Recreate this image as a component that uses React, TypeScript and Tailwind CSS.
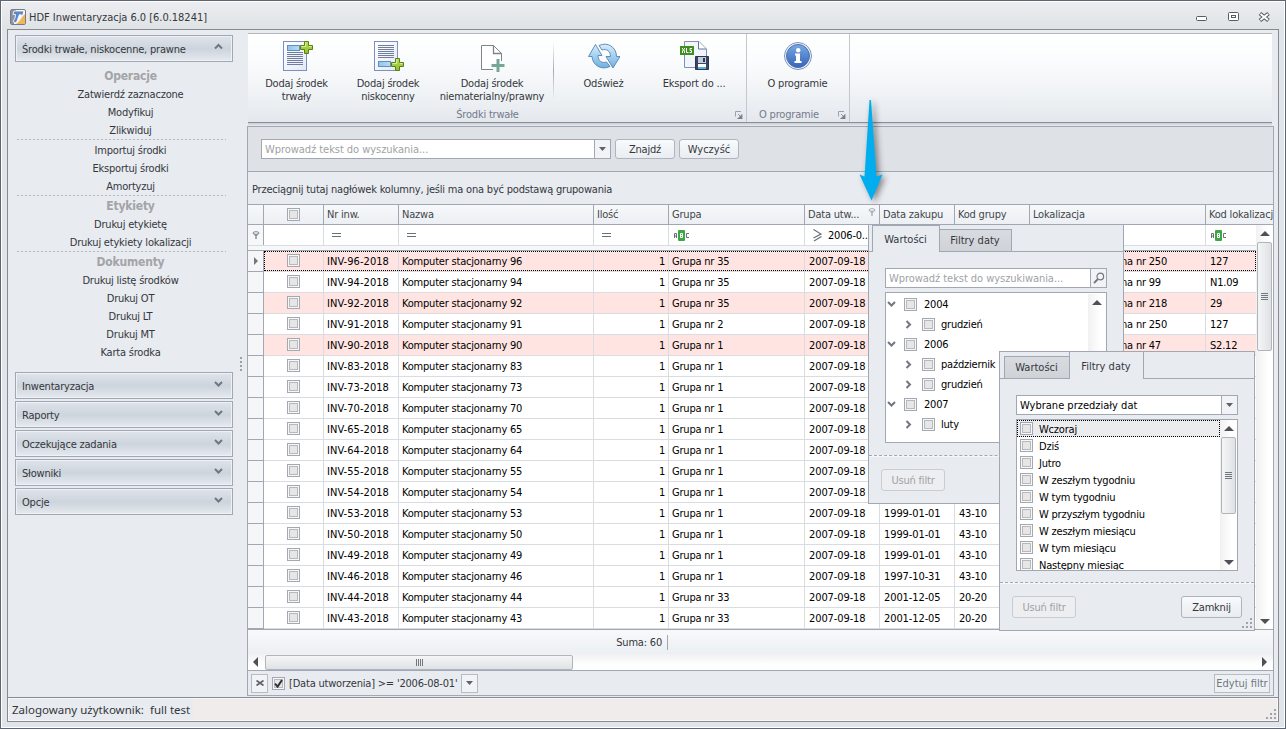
import React from 'react';

const sidebarGroups: { title?: string; items: string[] }[] = [
  { title: 'Operacje', items: ['Zatwierdź zaznaczone', 'Modyfikuj', 'Zlikwiduj'] },
  { items: ['Importuj środki', 'Eksportuj środki', 'Amortyzuj'] },
  { title: 'Etykiety', items: ['Drukuj etykietę', 'Drukuj etykiety lokalizacji'] },
  { title: 'Dokumenty', items: ['Drukuj listę środków', 'Drukuj OT', 'Drukuj LT', 'Drukuj MT', 'Karta środka'] },
];

type Row = { n: number; g: string; d?: string; k?: string; loc?: string; kod?: string; red?: boolean };
const rows: Row[] = [
  { n: 96, g: '35', loc: 'na nr 250', kod: '127', red: true },
  { n: 94, g: '35', loc: 'na nr 99', kod: 'N1.09' },
  { n: 92, g: '35', loc: 'na nr 218', kod: '29', red: true },
  { n: 91, g: '2', loc: 'na nr 250', kod: '127' },
  { n: 90, g: '1', loc: 'na nr 47', kod: 'S2.12', red: true },
  { n: 83, g: '1' },
  { n: 73, g: '1' },
  { n: 70, g: '1' },
  { n: 65, g: '1' },
  { n: 64, g: '1' },
  { n: 55, g: '1' },
  { n: 54, g: '1' },
  { n: 53, g: '1', d: '1999-01-01', k: '43-10' },
  { n: 50, g: '1', d: '1999-01-01', k: '43-10' },
  { n: 49, g: '1', d: '1999-01-01', k: '43-10' },
  { n: 46, g: '1', d: '1997-10-31', k: '43-10' },
  { n: 44, g: '33', d: '2001-12-05', k: '20-20' },
  { n: 43, g: '33', d: '2001-12-05', k: '20-20' },
];

const cols =
  'grid grid-cols-[16px_60px_75px_195px_75px_136px_75px_75px_75px_176px_1fr]';

function Check({ checked = false }: { checked?: boolean }) {
  return (
    <span className="flex h-[13px] w-[13px] shrink-0 items-center justify-center border border-[#a3a9b4] bg-[#f6f7f8]">
      <span className="h-[9px] w-[9px] border border-[#b9b9b9] bg-[#e6e6e6]">
        {checked && (
          <svg viewBox="0 0 9 9" className="-ml-px -mt-px h-[9px] w-[9px]">
            <path d="M1 4.6 3.6 7.6 8 1" fill="none" stroke="#2f3238" strokeWidth="2" />
          </svg>
        )}
      </span>
    </span>
  );
}

function Chevron({ dir }: { dir: 'up' | 'down' | 'right' }) {
  const d = dir === 'up' ? 'M1 5.5 4.5 2 8 5.5' : dir === 'down' ? 'M1 2 4.5 5.5 8 2' : 'M2.5 1 6 4.5 2.5 8';
  return (
    <svg viewBox="0 0 9 9" className="h-[9px] w-[9px] shrink-0">
      <path d={d} fill="none" stroke="#71767f" strokeWidth="2" />
    </svg>
  );
}

function Tri({ dir }: { dir: 'up' | 'down' | 'left' | 'right' }) {
  const d = { up: 'M0 7 5 2 10 7Z', down: 'M0 3 5 8 10 3Z', left: 'M7 0 2 5 7 10Z', right: 'M3 0 8 5 3 10Z' }[dir];
  return (
    <svg viewBox="0 0 10 10" className="h-[10px] w-[10px] shrink-0">
      <path d={d} fill="#4d5056" />
    </svg>
  );
}

function SmallTri() {
  return (
    <svg viewBox="0 0 7 4" className="h-1 w-[7px] shrink-0">
      <path d="M0 0H7L3.5 4Z" fill="#5d626b" />
    </svg>
  );
}

function Abc() {
  return (
    <svg viewBox="0 0 16 11" className="h-[11px] w-4">
      <rect x="4" width="7" height="11" rx="1" fill="#3fa648" />
      <path d="M.5 8V3.500H2.500V8M.5 6H2.500M15 3.500H12.500V7.500H15" fill="none" stroke="#6a6f78" />
      <path d="M6.500 3.500H8.500V7.500H6.500ZM6.500 5.500H8.500" fill="none" stroke="#fff" />
    </svg>
  );
}

function Eq() {
  return <span className="block h-1 w-[9px] border-y border-[#6a6f78]" />;
}

function Grip() {
  return (
    <svg viewBox="0 0 10 10" className="h-[10px] w-[10px]">
      <path
        d="M8 0h2v2H8ZM4 4h2v2H4ZM8 4h2v2H8ZM0 8h2v2H0ZM4 8h2v2H4ZM8 8h2v2H8Z"
        fill="#a1a4aa"
      />
    </svg>
  );
}

function Launcher() {
  return (
    <svg viewBox="0 0 8 8" className="mt-[2px] h-2 w-2">
      <path d="M.5 5.500V.5H6" fill="none" stroke="#9aa0ac" />
      <path d="M7 3.500V8H2.500ZM3 3 6 6" fill="#7a8090" stroke="#7a8090" strokeWidth=".8" />
    </svg>
  );
}

function Plus({ x, y }: { x: number; y: number }) {
  return (
    <g transform={`translate(${x} ${y})`}>
      <path
        d="M4.500.5h4v4h4v4h-4v4h-4v-4h-4v-4h4Z"
        fill="url(#plusFill)"
        stroke="#578016"
      />
      <path d="M5.500 5.500V1.500M1.500 5.500h4M9 5.500h2.500" stroke="#d6ee9a" fill="none" />
    </g>
  );
}

function PageIcon({ bottom = false }: { bottom?: boolean }) {
  const lines = bottom ? [5, 7, 9, 11, 13, 15, 17] : [12, 14, 16, 18, 20, 22, 24];
  return (
    <svg viewBox="0 0 32 32" className="h-8 w-8">
      <defs>
        <linearGradient id="pageFill" x2="1" y2="1">
          <stop stopColor="#fff" />
          <stop offset="1" stopColor="#e3eaf6" />
        </linearGradient>
        <linearGradient id="plusFill" x2="0" y2="1">
          <stop stopColor="#c3e065" />
          <stop offset="1" stopColor="#8dbb25" />
        </linearGradient>
        <linearGradient id="barFill" y2="0" x2="1">
          <stop stopColor="#8ec5ea" />
          <stop offset="1" stopColor="#b7dcf3" />
        </linearGradient>
      </defs>
      <rect x="2.500" y="1.500" width="23" height="29" fill="url(#pageFill)" stroke="#7d8fc0" />
      {lines.map((y) => (
        <path key={y} d={`M6 ${y + 0.5}H22`} stroke="#6f7c9c" />
      ))}
      {bottom ? (
        <rect x="6.500" y="21.500" width="12" height="5" fill="url(#barFill)" stroke="#5f8fc4" />
      ) : (
        <rect x="6.500" y="5.500" width="12" height="5" fill="url(#barFill)" stroke="#5f8fc4" />
      )}
      <Plus x={19} y={bottom ? 18 : 1} />
    </svg>
  );
}

function BlankPageIcon() {
  return (
    <svg viewBox="0 0 32 32" className="h-8 w-8">
      <path d="M5.500 5.500H17.500L25.500 13.500V21M17 29.500H5.500V5.500" fill="#fff" stroke="#808488" />
      <path d="M6 6H17L25 14V22H16V29H6Z" fill="#fff" />
      <path d="M17.500 5.500V13.500H25.500" fill="none" stroke="#808488" strokeWidth="1.300" />
      <path d="M22 19v13M15.500 25.500h13" stroke="#74a894" strokeWidth="3" />
    </svg>
  );
}

function RefreshIcon() {
  return (
    <svg viewBox="0 0 32 32" className="h-8 w-8">
      <defs>
        <linearGradient id="refresh" x2="0" y2="1">
          <stop stopColor="#d8eefa" />
          <stop offset="1" stopColor="#6fb1e2" />
        </linearGradient>
      </defs>
      <path
        d="M11 5.500C19.500 1.500 28.500 7 28.500 16.500H32L25 28 18 16.500H22.500C22.500 11 18.500 8.500 14 10Z"
        fill="url(#refresh)"
        stroke="#5483b5"
        strokeWidth=".9"
      />
      <path
        d="M22 26.500C13.500 30.500 4.500 25.500 4 16.500H.5L7.500 4.500 14 15.500H10C10 21 14 23.500 18.500 22Z"
        fill="url(#refresh)"
        stroke="#5483b5"
        strokeWidth=".9"
      />
    </svg>
  );
}

function XlsIcon() {
  return (
    <svg viewBox="0 0 32 32" className="h-8 w-8">
      <path d="M6.500 1.500H21L28.500 9V27.500H6.500Z" fill="#f2f5fb" stroke="#8091b8" />
      <path d="M20.500 1.500V9H28" fill="#fff" stroke="#60749c" />
      <rect x="2" y="6" width="14" height="9" fill="#3f8f1c" />
      <path
        d="M4.500 8v1l2 2v2M6.500 8v1l-2 2v2M8.500 8v4.500h2M14 8.500h-2v2h1.500v2h-2"
        fill="none"
        stroke="#fff"
      />
      <path d="M17.500 16.500H30.500V29.500H17.500Z" fill="#3b4560" stroke="#2d3650" />
      <rect x="20" y="17" width="8" height="6" fill="#c4cddb" />
      <rect x="25" y="18" width="2" height="4" fill="#2d3650" />
      <rect x="20" y="24" width="8" height="5" fill="#fff" />
      <rect x="20" y="27" width="8" height="2" fill="#4fb0e4" />
    </svg>
  );
}

function InfoIcon() {
  return (
    <svg viewBox="0 0 32 32" className="h-8 w-8">
      <defs>
        <linearGradient id="info" x2="0" y2="1">
          <stop stopColor="#7aa9e0" />
          <stop offset=".5" stopColor="#5586cf" />
          <stop offset="1" stopColor="#3a64b4" />
        </linearGradient>
      </defs>
      <circle cx="16" cy="16" r="13.500" fill="#eef2f9" stroke="#7f95bf" />
      <circle cx="16" cy="16" r="11.500" fill="url(#info)" stroke="#4a70b4" />
      <circle cx="16.200" cy="10.300" r="2.200" fill="#fff" />
      <path d="M13 13.500h5V21h1.500v2h-7v-2H14v-5.500h-1Z" fill="#fff" />
    </svg>
  );
}

function SearchIcon() {
  return (
    <svg viewBox="0 0 12 12" className="h-3 w-3">
      <circle cx="7.300" cy="4.500" r="3.300" fill="none" stroke="#71767f" strokeWidth="1.200" />
      <path d="M5 7 1 11" stroke="#71767f" strokeWidth="1.800" />
    </svg>
  );
}

function FilterPin({ light = false }: { light?: boolean }) {
  const c = light ? '#a9aeb8' : '#858b96';
  return (
    <svg viewBox="0 0 8 9" className="h-[9px] w-2">
      <path d="M.5 2 3.300 5V8H4.700V5L7.500 2Z" fill={c} />
      <ellipse cx="4" cy="2" rx="3" ry="1.300" fill="#f4f6f8" stroke={c} />
    </svg>
  );
}

function NavHeader({ text, open = false }: { text: string; open?: boolean }) {
  return (
    <div className="flex h-[27px] items-center justify-between border border-[#a2a8b3] bg-[linear-gradient(#dfe4ea,#cdd4dc_52%,#e6eaef)] pl-[6px] pr-[9px] shadow-[inset_0_0_0_1px_#eef1f5]">
      <span className="pt-[2px]">{text}</span>
      <span className="-mt-0.5 flex">
        <Chevron dir={open ? 'up' : 'down'} />
      </span>
    </div>
  );
}

function RibbonButton({ icon, lines, w }: { icon: React.ReactNode; lines: string[]; w: string }) {
  return (
    <div className={`flex flex-col items-center pt-[6px] ${w}`}>
      {icon}
      <div className="mt-[5px] text-center leading-[13px] whitespace-nowrap">
        {lines.map((l) => (
          <div key={l}>{l}</div>
        ))}
      </div>
    </div>
  );
}

function Btn({ text, cls, off = false }: { text: string; cls: string; off?: boolean }) {
  return (
    <button
      className={`flex items-center justify-center rounded-[3px] border pt-[2px] whitespace-nowrap ${
        off
          ? 'border-[#c9ccd2] bg-[#eceef2] text-[#a0a2a6]'
          : 'border-[#b0b4bb] bg-[linear-gradient(#f8fafc,#e9edf1)] text-[#34373c]'
      } ${cls}`}
    >
      {text}
    </button>
  );
}

function SideBar() {
  return (
    <aside className="w-[239px] shrink-0 pl-[7px] pt-[5px] text-[#34373c]">
      <div className="w-[218px]">
        <NavHeader text="Środki trwałe, niskocenne, prawne" open />
        <div className="flex flex-col pt-[5px] pb-[11px]">
          {sidebarGroups.map((g, i) => (
            <div key={i}>
              {i > 0 && (
                <div className="ml-[2px] mr-[7px] h-[2px] bg-[repeating-linear-gradient(90deg,#b3b7bd_0_2px,transparent_2px_4px)] bg-[length:100%_1px] bg-no-repeat" />
              )}
              {g.title && (
                <div className="h-[18px] w-[231px] text-center text-[12px] leading-[19px] font-bold text-[#a3a4a7]">{g.title}</div>
              )}
              {g.items.map((t) => (
                <div key={t} className="h-[18px] w-[231px] text-center leading-[20px]">
                  {t}
                </div>
              ))}
            </div>
          ))}
        </div>
        <div className="flex flex-col gap-[2px]">
          {['Inwentaryzacja', 'Raporty', 'Oczekujące zadania', 'Słowniki', 'Opcje'].map((t) => (
            <NavHeader key={t} text={t} />
          ))}
        </div>
      </div>
    </aside>
  );
}

function Ribbon() {
  return (
    <div className="flex h-[90px] w-[1024px] border-t border-b border-t-[#b3b7c0] border-b-[#8b8f97] bg-[linear-gradient(#fff,#fbfcfd_30%,#eff2f5_70%,#e4e7ec)] text-[#34373c]">
      <div className="flex w-[499px] flex-col border-r border-[#c3c7cf]">
        <div className="flex h-[71px]">
          <RibbonButton w="w-[97px]" icon={<PageIcon />} lines={['Dodaj środek', 'trwały']} />
          <RibbonButton w="w-[86px]" icon={<PageIcon bottom />} lines={['Dodaj środek', 'niskocenny']} />
          <RibbonButton w="w-[122px]" icon={<BlankPageIcon />} lines={['Dodaj środek', 'niematerialny/prawny']} />
          <div className="mt-2 h-[58px] w-px bg-[linear-gradient(transparent,#a5a9b1_50%,transparent)]" />
          <RibbonButton w="w-[99px]" icon={<RefreshIcon />} lines={['Odśwież']} />
          <RibbonButton w="w-[82px]" icon={<XlsIcon />} lines={['Eksport do ...']} />
        </div>
        <div className="flex items-center pr-[3px] text-[#737a8c]">
          <span className="h-[17px] flex-1 pr-[8px] text-center leading-[19px]">Środki trwałe</span>
          <Launcher />
        </div>
      </div>
      <div className="flex w-[103px] flex-col border-r border-[#c3c7cf]">
        <div className="flex h-[71px]">
          <RibbonButton w="w-[101px]" icon={<InfoIcon />} lines={['O programie']} />
        </div>
        <div className="flex items-center pr-[3px] text-[#737a8c]">
          <span className="h-[17px] flex-1 pr-[7px] text-center leading-[19px]">O programie</span>
          <Launcher />
        </div>
      </div>
    </div>
  );
}

const headers = ['Nr inw.', 'Nazwa', 'Ilość', 'Grupa', 'Data utw...', 'Data zakupu', 'Kod grupy', 'Lokalizacja', 'Kod lokalizacji'];

function Table() {
  const cell = 'border-r border-[#d9dce0] overflow-hidden whitespace-nowrap pl-[3px]';
  return (
    <div className="flex flex-col">
      <div className={`${cols} h-[21px] w-[1025px] border-y border-[#a2a8b3] bg-[linear-gradient(#f6f8fa,#eceff3)] text-[#43464c]`}>
        <span className="border-r border-[#a2a8b3]" />
        <span className="flex justify-center border-r border-[#a2a8b3] pt-[3px]">
          <Check />
        </span>
        {headers.map((h, i) => (
          <span
            key={h}
            className={`flex justify-between overflow-hidden pl-[3px] leading-[20px] whitespace-nowrap ${
              i < 8 ? 'border-r border-[#a2a8b3]' : ''
            }`}
          >
            {h}
            {i === 4 && (
              <span className="mt-[3px] mr-[3px]">
                <FilterPin light />
              </span>
            )}
          </span>
        ))}
      </div>
      <div className="flex h-[405px] border-b border-[#a2a8b3]">
        <div className="w-[1008px] bg-white text-black">
          <div className={`${cols} h-[21px] border-b border-[#d9dce0]`}>
            <span className="flex items-center justify-center border-r border-[#a2a8b3] bg-[#f5f7f9]">
              <FilterPin />
            </span>
            <span className={cell} />
            {headers.map((h, i) => (
              <span
                key={h}
                className={`flex items-center overflow-hidden whitespace-nowrap ${i < 8 ? 'border-r border-[#d9dce0]' : ''}`}
              >
                {i < 3 && (
                  <span className="ml-[8px]">
                    <Eq />
                  </span>
                )}
                {(i === 3 || i === 8) && (
                  <span className="ml-[5px]">
                    <Abc />
                  </span>
                )}
                {i === 4 && (
                  <>
                    <svg viewBox="0 0 9 13" className="ml-[8px] mr-[6px] h-[13px] w-[9px] shrink-0">
                      <path d="M.5.5 8 5 .5 9M1 12 8.500 7.500" fill="none" stroke="#6a6f78" strokeWidth="1.200" />
                    </svg>
                    <span className="pt-[2px]">2006-0...</span>
                  </>
                )}
              </span>
            ))}
          </div>
          <div className="h-[5px] border-b border-[#a2a8b3] bg-[#f5f7f9]" />
          {rows.map((r, i) => (
            <div key={r.n} className={`relative ${cols} h-[21px] leading-[22px]`}>
              <span className="flex items-center justify-center border-r border-b border-[#a2a8b3] bg-[#f4f6f8]">
                {i === 0 && (
                  <svg viewBox="0 0 4 8" className="h-2 w-1">
                    <path d="M0 0 4 4 0 8Z" fill="#71767f" />
                  </svg>
                )}
              </span>
              <div className={`col-span-10 grid h-[21px] grid-cols-[60px_75px_195px_75px_136px_75px_75px_75px_176px_1fr] grid-rows-[20px] border-b border-[#d9dce0] ${r.red ? 'bg-[#ffe4e1]' : 'bg-white'}`}>
                <span className="flex justify-center border-r border-[#d9dce0] pt-[3px]">
                  <Check />
                </span>
                <span className={`${cell} tracking-[0.05px]`}>INV-{r.n}-2018</span>
                <span className={cell}>Komputer stacjonarny {r.n}</span>
                <span className={`${cell} pr-[3px] text-right`}>1</span>
                <span className={cell}>Grupa nr {r.g}</span>
                <span className={`${cell} pl-[4px] tracking-[-0.1px]`}>2007-09-18</span>
                <span className={`${cell} pl-[4px] tracking-[-0.1px]`}>{r.d}</span>
                <span className={`${cell} pl-[4px]`}>{r.k}</span>
                <span className="flex border-r border-[#d9dce0]">
                  <span className="ml-[91px] whitespace-nowrap">{r.loc}</span>
                </span>
                <span className="pl-[4px]">{r.kod}</span>
              </div>
              {i === 0 && <div className="absolute top-0 right-0 left-4 h-5 border border-dotted border-black" />}
            </div>
          ))}
        </div>
        <div className="flex w-[17px] flex-col items-center bg-[linear-gradient(90deg,#f1f1f1,#fff_70%)] pt-[4px] pb-[3px]">
          <Tri dir="up" />
          <div className="mt-[3px] flex h-[109px] w-[15px] flex-col items-center justify-center gap-px rounded-[2px] border border-[#b0b4bb] bg-[linear-gradient(90deg,#f4f5f6,#dfe2e5)]">
            {[0, 1, 2, 3].map((k) => (
              <span key={k} className="h-px w-[7px] bg-[#71767f]" />
            ))}
          </div>
          <div className="flex-1" />
          <Tri dir="down" />
        </div>
      </div>
    </div>
  );
}

function Grid() {
  return (
    <div className="flex h-[570px] w-[1027px] flex-col border border-[#a2a8b3] bg-[#e8ebf0]">
      <div className="flex h-[45px] items-center border-b border-[#a2a8b3] bg-[#dee1e6] pl-[13px]">
        <div className="flex h-5 w-[350px] border border-[#a2a8b3] bg-white">
          <span className="flex-1 pl-[3px] leading-[20px] tracking-[-0.05px] text-[#a0a2a6]">Wprowadź tekst do wyszukania...</span>
          <span className="flex w-4 items-center justify-center border-l border-[#a2a8b3] bg-[#f1f3f6]">
            <SmallTri />
          </span>
        </div>
        <Btn text="Znajdź" cls="ml-[4px] h-5 w-[60px]" />
        <Btn text="Wyczyść" cls="ml-[4px] h-5 w-[60px] tracking-[0px]" />
      </div>
      <div className="h-[32px] pl-[4px] leading-[36px] text-[#34373c]">
        Przeciągnij tutaj nagłówek kolumny, jeśli ma ona być podstawą grupowania
      </div>
      <Table />
      <div className="flex h-[24px] bg-[linear-gradient(#f8f9fb,#eceff3)] text-[#34373c]">
        <span className="mt-[5px] h-[15px] w-[420px] border-r border-[#a2a8b3] pr-[5px] text-right leading-[16px]">Suma: 60</span>
      </div>
      <div className="flex h-[16px] items-center justify-between bg-[linear-gradient(#f1f1f1,#fff_70%)] pr-[4px] pl-[3px]">
        <div className="flex items-center">
          <Tri dir="left" />
          <div className="ml-[4px] flex h-[15px] w-[308px] items-center justify-center gap-px rounded-[2px] border border-[#b0b4bb] bg-[linear-gradient(#f4f5f6,#dfe2e5)]">
            {[0, 1, 2, 3].map((k) => (
              <span key={k} className="h-[7px] w-px bg-[#71767f]" />
            ))}
          </div>
        </div>
        <Tri dir="right" />
      </div>
      <div className="flex flex-1 items-center border-t border-[#a2a8b3] pr-[3px] pl-[3px] text-[#34373c]">
        <span className="flex h-[19px] w-[17px] items-center justify-center border border-[#b7bbc3] bg-[#f1f3f6]">
          <svg viewBox="0 0 8 6" className="h-[6px] w-2">
            <path d="M.5.5 7.500 5.500M7.500.5.5 5.500" stroke="#5d626b" strokeWidth="1.700" />
          </svg>
        </span>
        <span className="ml-[4px] mr-[4px] flex">
          <Check checked />
        </span>
        <span className="w-[169px] pt-px whitespace-nowrap">[Data utworzenia] &gt;= '2006-08-01'</span>
        <span className="ml-[3px] flex h-[19px] w-[17px] items-center justify-center border border-[#b7bbc3] bg-[#f1f3f6]">
          <SmallTri />
        </span>
        <span className="ml-auto flex h-[19px] w-[56px] items-center justify-center border border-[#b7bbc3] bg-[#eef1f4] pt-px tracking-[0px] whitespace-nowrap text-[#71767f]">
          Edytuj filtr
        </span>
      </div>
    </div>
  );
}

function ValuesPopup() {
  const tree = [
    ['2004', ['grudzień']],
    ['2006', ['październik', 'grudzień']],
    ['2007', ['luty']],
  ] as [string, string[]][];
  return (
    <div className="absolute top-[224px] left-[867px] flex h-[279px] w-[256px] flex-col border border-t-0 border-[#a2a8b3] bg-[#e8ebf0] text-[#34373c]">
      <div className="flex h-[27px] items-end tracking-[0px]">
        <span className="w-[3px] border-b border-[#a2a8b3]" />
        <span className="h-[27px] w-[68px] border-x border-t border-[#a2a8b3] pr-px text-center leading-[28px]">Wartości</span>
        <span className="h-[23px] w-[72px] border-y border-r border-[#a2a8b3] bg-[linear-gradient(#d8dbe0,#cfd2d7)] pr-px text-center leading-[22px]">
          Filtry daty
        </span>
        <span className="flex-1 border-b border-[#a2a8b3]" />
      </div>
      <div className="mt-[16px] ml-[16px] flex h-5 w-[222px] border border-[#a2a8b3] bg-white">
        <span className="flex-1 pl-[3px] leading-[20px] tracking-[-0.05px] text-[#a0a2a6]">Wprowadź tekst do wyszukiwania...</span>
        <span className="flex w-4 items-center justify-center border-l border-[#a2a8b3] bg-[#f1f3f6]">
          <SearchIcon />
        </span>
      </div>
      <div className="mt-[4px] ml-[16px] flex h-[151px] w-[222px] justify-between border border-[#a2a8b3] bg-white text-black">
        <div className="pt-px pl-px">
          {tree.map(([year, months]) => (
            <div key={year}>
              <div className="flex h-5 items-center">
                <Chevron dir="down" />
                <span className="mr-[7px] ml-[8px]">
                  <Check />
                </span>
                <span className="pt-px">{year}</span>
              </div>
              {months.map((m) => (
                <div key={m} className="flex h-5 items-center pl-[17px]">
                  <Chevron dir="right" />
                  <span className="mr-[6px] ml-[9px]">
                    <Check />
                  </span>
                  <span className="pt-px">{m}</span>
                </div>
              ))}
            </div>
          ))}
        </div>
        <div className="mt-px flex w-[18px] justify-center bg-[linear-gradient(90deg,#f1f1f1,#fff_70%)] pt-[4px]">
          <Tri dir="up" />
        </div>
      </div>
      <div className="mt-[12px] h-[2px] border-t border-dashed border-[#a2a8b3] bg-[#f4f6f8]" />
      <Btn text="Usuń filtr" off cls="mt-[12px] ml-[12px] h-[22px] w-[64px]" />
    </div>
  );
}

const ranges = ['Wczoraj', 'Dziś', 'Jutro', 'W zeszłym tygodniu', 'W tym tygodniu', 'W przyszłym tygodniu', 'W zeszłym miesiącu', 'W tym miesiącu', 'Następny miesiąc'];

function DatesPopup() {
  return (
    <div className="absolute top-[350px] left-[998px] flex h-[280px] w-[256px] flex-col border border-[#a2a8b3] bg-[#e8ebf0] text-[#34373c]">
      <div className="flex h-[27px] items-end tracking-[0px]">
        <span className="w-[4px] border-b border-[#a2a8b3]" />
        <span className="h-[23px] w-[65px] border-y border-l border-[#a2a8b3] bg-[linear-gradient(#d8dbe0,#cfd2d7)] pr-px text-center leading-[22px]">
          Wartości
        </span>
        <span className="h-[27px] w-[75px] border-x border-[#a2a8b3] pr-px text-center leading-[29px]">Filtry daty</span>
        <span className="flex-1 border-b border-[#a2a8b3]" />
      </div>
      <div className="mt-[16px] ml-[16px] flex h-5 w-[222px] border border-[#a2a8b3] bg-white text-black">
        <span className="flex-1 pl-[3px] leading-[20px] tracking-[0px]">Wybrane przedziały dat</span>
        <span className="flex w-4 items-center justify-center border-l border-[#a2a8b3] bg-[#f1f3f6]">
          <SmallTri />
        </span>
      </div>
      <div className="mt-[4px] ml-[16px] flex h-[152px] w-[222px] overflow-hidden border border-[#a2a8b3] bg-white text-black">
        <div className="w-[203px]">
          {ranges.map((t, i) => (
            <div
              key={t}
              className={`flex h-[17px] items-center gap-[6px] border border-dotted pl-[2px] whitespace-nowrap ${
                i === 0 ? 'border-black bg-[#ebecee]' : 'border-transparent'
              }`}
            >
              <Check />
              <span className="pt-[2px]">{t}</span>
            </div>
          ))}
        </div>
        <div className="flex flex-1 flex-col items-center bg-[linear-gradient(90deg,#f1f1f1,#fff_70%)] pt-[4px] pb-[3px]">
          <Tri dir="up" />
          <div className="mt-[3px] flex h-[77px] w-[15px] flex-col items-center justify-center gap-px rounded-[2px] border border-[#b0b4bb] bg-[linear-gradient(90deg,#f4f5f6,#dfe2e5)]">
            {[0, 1, 2, 3].map((k) => (
              <span key={k} className="h-px w-[7px] bg-[#71767f]" />
            ))}
          </div>
          <div className="flex-1" />
          <Tri dir="down" />
        </div>
      </div>
      <div className="mt-[11px] h-[2px] border-t border-dashed border-[#a2a8b3] bg-[#f4f6f8]" />
      <div className="flex justify-between pt-[12px] pr-[12px] pl-[12px]">
        <Btn text="Usuń filtr" off cls="h-[22px] w-[64px]" />
        <Btn text="Zamknij" cls="h-[22px] w-[61px]" />
      </div>
      <div className="mt-auto mr-[2px] mb-[2px] flex h-0 items-end justify-end">
        <Grip />
      </div>
    </div>
  );
}

export default function App() {
  return (
    <div className="relative flex h-[729px] w-[1286px] flex-col overflow-hidden border border-[#5f6673] bg-[#e1e4e8] font-['DejaVu_Sans_Condensed','DejaVu_Sans',sans-serif] text-[11px] leading-[14px] tracking-[-0.2px] [font-stretch:condensed] shadow-[inset_0_0_0_1px_#fff]">
      <header className="m-px mb-0 flex h-[27px] items-center bg-[linear-gradient(#ecedf0,#dfe3e5)] pr-[13px] pl-2 pt-[3px] text-[#34373c]">
        <svg viewBox="0 0 16 16" className="h-4 w-4">
          <rect x=".5" y=".5" width="15" height="15" rx="1.500" fill="#f5f7fa" stroke="#777b82" />
          <path d="M1 1H6L4 15H1Z" fill="#8d939c" />
          <path d="M15 5V15H6C10 13 11 8 15 5Z" fill="#f0b65c" />
          <path d="M4 2H14L12.500 6.500 9.500 5.500C8 8 8 11 6 14L3 12.500C5 9.500 5.500 8 5.500 5.500H3Z" fill="#5c87c9" stroke="#fff" strokeWidth=".8" />
        </svg>
        <span className="ml-[3px] pt-[2px] tracking-[-0.03px]">HDF Inwentaryzacja 6.0 [6.0.18241]</span>
        <svg viewBox="0 0 76 12" className="ml-auto h-3 w-[76px]">
          <rect x="1.500" y="5.500" width="10" height="4" rx="1" fill="#fff" stroke="#565b64" />
          <rect x="33.500" y="1.500" width="10" height="8" rx="1" fill="#fff" stroke="#565b64" />
          <rect x="36.500" y="4.500" width="4" height="2" fill="#fff" stroke="#565b64" />
          <path d="M65 2.500 73.500 9.500M73.500 2.500 65 9.500" stroke="#565b64" strokeWidth="4" />
          <path d="M65.500 3 73 9M73 3 65.500 9" stroke="#fff" strokeWidth="2" />
        </svg>
      </header>
      <div className="ml-[6px] flex h-[693px] w-[1272px] flex-col border border-[#868b92] bg-[#e8ebf0]">
        <div className="flex h-[669px] pt-0">
          <SideBar />
          <div className="flex flex-1 flex-col pt-[3px]">
            <div className="pl-px">
              <Ribbon />
              <div className="h-[3px] w-[1024px] bg-[linear-gradient(#c9ccd2,#e8ebf0)]" />
            </div>
            <Grid />
          </div>
        </div>
        <footer className="flex flex-1 border-t border-[#868b92] bg-[#f0eceb] font-['Noto_Sans','Open_Sans',sans-serif] text-[11.5px] [font-stretch:normal] shadow-[inset_0_0_0_1px_#f8f8f8]">
          <span className="my-px ml-px w-[184px] bg-[#e8ebf0] pl-[3px] leading-[21px] tracking-normal whitespace-pre text-[#34373c]">
            Zalogowany użytkownik:{'  '}full test
          </span>
          <span className="mt-auto mr-[2px] mb-[2px] ml-auto">
            <Grip />
          </span>
        </footer>
      </div>
      <div className="absolute top-[356px] left-[239px] h-[15px] w-[2px] bg-[repeating-linear-gradient(#9a9fa8_0_2px,transparent_2px_4px)]" />
      <ValuesPopup />
      <DatesPopup />
      <svg viewBox="0 0 40 120" className="absolute top-[91px] left-[850px] h-[120px] w-10 drop-shadow-[3px_2px_3px_rgba(0,0,0,0.45)]">
        <path d="M18.500 8h1.500L25.500 84.500 31.500 82.500 20.500 108.500 8.500 82.500 13.500 84.500Z" fill="#00aeef" />
      </svg>
    </div>
  );
}
